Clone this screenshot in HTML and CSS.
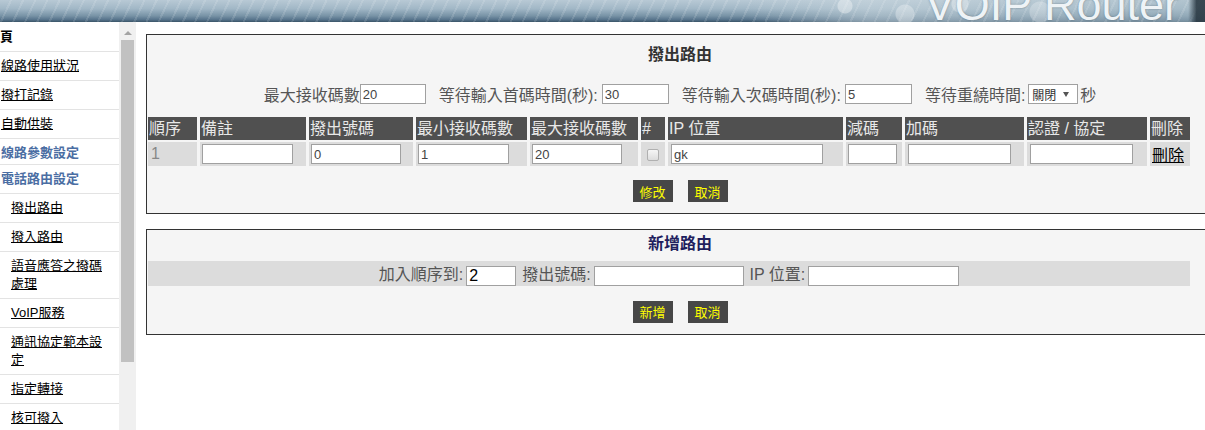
FILE: index.html
```html
<!DOCTYPE html>
<html lang="zh-Hant">
<head>
    <meta charset="UTF-8">
    <title>VOIP Router - 撥出路由</title>
    <link rel="stylesheet" href="styles.css">
</head>
<body>
    <div class="banner"><span class="banner-title">VOIP Router</span></div>

    <div class="frames">
        <div class="menu">
            <ul class="menu-list">
                <li class="menu-head">頁</li>
                <li><a href="#">線路使用狀況</a></li>
                <li><a href="#">撥打記錄</a></li>
                <li><a href="#">自動供裝</a></li>
                <li class="menu-group tight">線路參數設定</li>
                <li class="menu-group">電話路由設定</li>
                <li class="sub"><a href="#">撥出路由</a></li>
                <li class="sub"><a href="#">撥入路由</a></li>
                <li class="sub"><a href="#">語音應答之撥碼處理</a></li>
                <li class="sub"><a href="#">VoIP服務</a></li>
                <li class="sub"><a href="#">通訊協定範本設定</a></li>
                <li class="sub"><a href="#">指定轉接</a></li>
                <li class="sub"><a href="#">核可撥入</a></li>
            </ul>
        </div>
        <div class="scrollbar">
            <div class="scroll-up"></div>
            <div class="scroll-thumb"></div>
        </div>

        <div class="main">
            <!-- outgoing routes -->
            <div class="panel">
                <div class="panel-title">撥出路由</div>
                <div class="limits">
                    <span>最大接收碼數</span><input class="txt w66" type="text" value="20">
                    <span class="lbl">等待輸入首碼時間(秒):</span><input class="txt w67" type="text" value="30">
                    <span class="lbl">等待輸入次碼時間(秒):</span><input class="txt w67" type="text" value="5">
                    <span class="lbl tight">等待重繞時間:</span><span class="select-wrap"><select class="sel"><option>關閉</option><option>1</option></select></span><span class="unit">秒</span>
                </div>
                <table class="routes">
                    <tr>
                        <th class="c-seq">順序</th>
                        <th class="c-note">備註</th>
                        <th class="c-num">撥出號碼</th>
                        <th class="c-min">最小接收碼數</th>
                        <th class="c-max">最大接收碼數</th>
                        <th class="c-hash">#</th>
                        <th class="c-ip">IP 位置</th>
                        <th class="c-strip">減碼</th>
                        <th class="c-add">加碼</th>
                        <th class="c-auth">認證 / 協定</th>
                        <th class="c-del">刪除</th>
                    </tr>
                    <tr>
                        <td class="seq">1</td>
                        <td><input class="txt w91" type="text" value=""></td>
                        <td><input class="txt w90" type="text" value="0"></td>
                        <td><input class="txt w91" type="text" value="1"></td>
                        <td><input class="txt w90" type="text" value="20"></td>
                        <td class="check"><input class="box" type="checkbox"></td>
                        <td class="pad3"><input class="txt w152" type="text" value="gk"></td>
                        <td><input class="txt w49" type="text" value=""></td>
                        <td class="pad3"><input class="txt w103" type="text" value=""></td>
                        <td class="pad3"><input class="txt w103" type="text" value=""></td>
                        <td class="del"><a href="#">刪除</a></td>
                    </tr>
                </table>
                <div class="actions">
                    <button class="btn">修改</button>
                    <button class="btn">取消</button>
                </div>
            </div>

            <!-- new route -->
            <div class="panel panel-add">
                <div class="panel-title add">新增路由</div>
                <table class="routes add-row">
                    <tr>
                        <td class="add-fields"><span>加入順序到:</span><input class="txt big w50" type="text" value="2"><span class="lbl">撥出號碼:</span><input class="txt w150" type="text" value=""><span class="lbl">IP 位置:</span><input class="txt w151" type="text" value=""></td>
                    </tr>
                </table>
                <div class="actions add-actions">
                    <button class="btn">新增</button>
                    <button class="btn">取消</button>
                </div>
            </div>
        </div>
    </div>
</body>
</html>
```

FILE: styles.css
```css
* {
    box-sizing: border-box;
}
body {
    margin: 0;
    font-family: "Liberation Sans", "Noto Sans CJK TC", sans-serif;
    background-color: white;
    overflow: hidden;
}

/* top banner */
.banner {
    height: 22px;
    overflow: hidden;
    display: flex;
    justify-content: flex-end;
    align-items: flex-end;
    padding-right: 26px;
    background:
        linear-gradient(to right, transparent 0, transparent 98.6%, rgba(35, 50, 60, 0.85) 99.3%),
        radial-gradient(circle at 845px 6px, rgba(255, 255, 255, 0.35) 0 7px, transparent 8px),
        radial-gradient(circle at 905px 14px, rgba(255, 255, 255, 0.3) 0 9px, transparent 10px),
        radial-gradient(circle at 960px 4px, rgba(255, 255, 255, 0.3) 0 8px, transparent 9px),
        radial-gradient(circle at 1040px 12px, rgba(255, 255, 255, 0.25) 0 10px, transparent 11px),
        repeating-linear-gradient(115deg, rgba(255, 255, 255, 0) 0 9px, rgba(255, 255, 255, 0.12) 9px 11px),
        linear-gradient(to right, rgba(200, 214, 222, 0) 0, rgba(200, 214, 222, 0) 62%, rgba(200, 214, 222, 0.55) 72%, rgba(170, 190, 200, 0.5) 100%),
        linear-gradient(#b8c9d5 0, #a1b7c6 40%, #7893a6 72%, #55728a 90%, #3a5467 100%);
}
.banner-title {
    font-size: 45px;
    line-height: 45px;
    margin-bottom: -5px;
    color: #eef3f6;
    text-shadow: 0 0 2px rgba(40, 60, 70, 0.5);
    white-space: nowrap;
}

.frames {
    display: flex;
    height: 408px;
}

/* left menu frame */
.menu {
    width: 119px;
    flex: none;
    overflow: hidden;
}
.menu-list {
    list-style: none;
    margin: 0;
    padding: 0;
    font-size: 13px;
    line-height: 18px;
}
.menu-list li {
    padding: 5px 8px 5px 1px;
    border-bottom: 1px solid #e3e3e3;
}
.menu-list a {
    color: black;
    text-decoration: underline;
}
.menu-list .menu-head {
    font-weight: bold;
    padding: 6px 0 5px 0;
}
.menu-list .menu-group {
    font-weight: bold;
    color: #4b6ea3;
}
.menu-list .menu-group.tight {
    padding: 5px 0 2px 1px;
}
.menu-list .sub {
    padding-left: 11px;
}

.scrollbar {
    width: 17px;
    flex: none;
    background-color: #f0f0f0;
    display: flex;
    flex-direction: column;
    align-items: center;
}
.scroll-up {
    width: 0;
    height: 0;
    border-left: 4px solid transparent;
    border-right: 4px solid transparent;
    border-bottom: 4px solid #a3a3a3;
    margin: 9px 0 5px;
}
.scroll-thumb {
    width: 13px;
    height: 322px;
    background-color: #c1c1c1;
}

/* main frame */
.main {
    flex: 1;
    min-width: 0;
    overflow: hidden;
    padding: 12px 0 0 10px;
}
.panel {
    width: 1068px;
    border: 1px solid #333;
    background-color: #f5f5f5;
    padding: 10px 0 11px;
}
.panel-add {
    margin-top: 15px;
    padding-top: 4px;
}
.panel-title {
    font-size: 16px;
    font-weight: bold;
    line-height: 20px;
    text-align: center;
    color: #333;
}
.panel-title.add {
    color: #1f1f5e;
}

.limits {
    margin-top: 17px;
    height: 24px;
    display: flex;
    justify-content: center;
    align-items: center;
    font-size: 16px;
    color: #555;
    white-space: nowrap;
}
.limits .lbl {
    margin: 0 4px 0 13px;
}
.limits .lbl.tight {
    margin-right: 3px;
}
.limits .unit {
    margin-left: 2px;
}

.txt {
    height: 20px;
    border: 1px solid #a0a0a0;
    background-color: white;
    font: 13px "Liberation Sans", sans-serif;
    color: #444;
    padding: 0 2px;
    vertical-align: middle;
}
.txt.big {
    font-size: 16px;
    color: black;
}
.w49 { width: 49px; }
.w50 { width: 50px; }
.w66 { width: 66px; }
.w67 { width: 67px; }
.w90 { width: 90px; }
.w91 { width: 91px; }
.w103 { width: 103px; }
.w150 { width: 150px; }
.w151 { width: 151px; }
.w152 { width: 152px; }

.select-wrap {
    position: relative;
    display: inline-block;
    height: 20px;
}
.select-wrap::after {
    content: "";
    position: absolute;
    right: 9px;
    top: 8px;
    border-left: 3px solid transparent;
    border-right: 3px solid transparent;
    border-top: 5px solid #555;
    pointer-events: none;
}
.sel {
    appearance: none;
    -webkit-appearance: none;
    width: 50px;
    height: 20px;
    border: 1px solid #a0a0a0;
    border-radius: 0;
    background-color: white;
    font: 12px "Noto Sans CJK TC", sans-serif;
    color: #333;
    padding: 0 0 0 3px;
    display: block;
}

.routes {
    table-layout: fixed;
    border-collapse: separate;
    border-spacing: 3px 2px;
    width: 1048px;
    margin: 9px 0 0 -2px;
}
.routes th {
    background-color: #505050;
    color: #e8e8e8;
    font-weight: normal;
    font-size: 16px;
    line-height: 23px;
    height: 23px;
    padding: 0 0 0 1px;
    text-align: left;
    white-space: nowrap;
    overflow: hidden;
}
.routes td {
    background-color: #dcdcdc;
    height: 23px;
    padding: 0 0 0 2px;
    font-size: 16px;
    color: #888;
    vertical-align: middle;
    white-space: nowrap;
}
.routes td.seq {
    padding-left: 3px;
}
.routes td.pad3 {
    padding-left: 3px;
}
.routes td.check {
    padding: 0;
    text-align: center;
}
.routes td.del a {
    color: black;
    text-decoration: underline;
}
.c-seq { width: 49px; }
.c-note { width: 106px; }
.c-num { width: 104px; }
.c-min { width: 111px; }
.c-max { width: 108px; }
.c-hash { width: 24px; }
.c-ip { width: 175px; }
.c-strip { width: 56px; }
.c-add { width: 119px; }
.c-auth { width: 120px; }
.c-del { width: 40px; }

.box {
    appearance: none;
    -webkit-appearance: none;
    width: 12px;
    height: 12px;
    margin: 0;
    border: 1px solid #b0b0b0;
    border-radius: 2px;
    background: linear-gradient(#f6f6f6, #dddddd);
    vertical-align: middle;
}

.add-row {
    margin-top: 5px;
}
.routes td.add-fields {
    text-align: center;
    color: #555;
    padding: 0;
}
.add-fields .txt {
    margin-left: 3px;
}
.add-fields .lbl {
    margin-left: 6px;
}

.actions {
    margin-top: 12px;
    display: flex;
    justify-content: center;
    gap: 15px;
}
.add-actions {
    margin-top: 13px;
}
.btn {
    width: 40px;
    height: 22px;
    border: none;
    padding: 0;
    background-color: #474747;
    color: #ffff00;
    font: 13px "Noto Sans CJK TC", sans-serif;
    cursor: pointer;
}
```
